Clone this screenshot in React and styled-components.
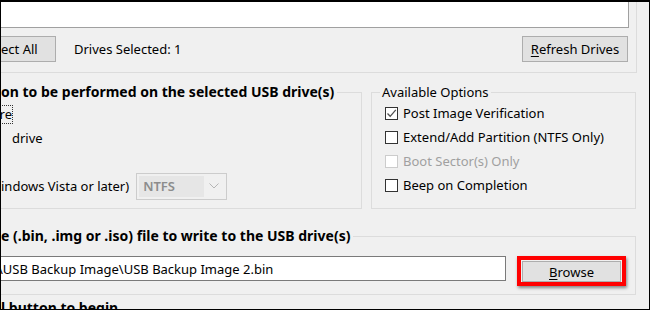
import React from 'react';
import styled, { createGlobalStyle } from 'styled-components';

const GlobalStyle = createGlobalStyle`
  html, body {
    margin: 0;
    padding: 0;
    background: #ffffff;
  }
  * {
    box-sizing: border-box;
  }
`;

const Frame = styled.div`
  width: 650px;
  height: 310px;
  border: 1px solid #000;
  border-top-width: 2px;
  background: #f0f0f0;
  overflow: hidden;
  display: flex;
  flex-direction: column;
  font-family: 'Noto Sans', 'Open Sans', sans-serif;
  font-size: 13px;
  color: #000;
`;

const DriveGroup = styled.div`
  width: 636px;
  height: 71px;
  flex-shrink: 0;
  padding-right: 7px;
  border-right: 1px solid #dcdcdc;
  border-bottom: 1px solid #dcdcdc;
`;

const DriveList = styled.div`
  height: 26px;
  background: #fff;
  border-right: 1px solid #a0a0a0;
  border-bottom: 1px solid #a0a0a0;
`;

const ButtonRow = styled.div`
  display: flex;
  align-items: center;
  margin-top: 8px;
  padding-right: 1px;
`;

const Button = styled.button`
  height: ${(p) => p.$h || 26}px;
  width: ${(p) => p.$w}px;
  padding: 0;
  background: #e1e1e1;
  border: 1px solid #adadad;
  font: inherit;
  color: #000;
  display: flex;
  align-items: center;
  justify-content: ${(p) => (p.$cut ? 'flex-start' : 'center')};
  ${(p) => p.$cut && 'border-left: none;'}
  u {
    text-decoration: underline;
    text-underline-offset: 2px;
  }
`;

const Status = styled.span`
  margin-left: 18px;
`;

const Spacer = styled.div`
  flex: 1;
`;

const Row = styled.div`
  display: flex;
  margin-top: ${(p) => p.$mt || 0}px;
  flex-shrink: 0;
`;

const Group = styled.fieldset`
  margin: 0;
  margin-left: ${(p) => p.$ml || 0}px;
  padding: 0;
  min-width: 0;
  width: ${(p) => p.$w}px;
  height: ${(p) => p.$h}px;
  border: 1px solid #dcdcdc;
  ${(p) => p.$cut && 'border-left: none;'}
  flex-shrink: 0;
`;

const Legend = styled.legend`
  padding: ${(p) => (p.$cut ? '0 3px 0 0' : '0 2px')};
  margin-left: ${(p) => p.$ml || 0}px;
  line-height: 18px;
  font-size: ${(p) => (p.$bold ? 14 : 13)}px;
  font-weight: ${(p) => (p.$bold ? 700 : 400)};
  white-space: nowrap;
`;

const Options = styled.div`
  display: flex;
  flex-direction: column;
  padding-left: ${(p) => p.$pl || 0}px;
  margin-top: ${(p) => p.$mt || 0}px;
`;

const OptionRow = styled.div`
  height: 24px;
  display: flex;
  align-items: center;
  color: ${(p) => (p.$disabled ? '#a0a0a0' : '#000')};
`;

const Focus = styled.span`
  outline: 1px dotted #333;
  line-height: 17px;
  width: 11px;
  display: inline-flex;
  justify-content: flex-end;
  overflow: hidden;
`;

const Indent = styled.span`
  margin-left: ${(p) => p.$ml}px;
`;

const Box = styled.span`
  width: 13px;
  height: 13px;
  border: 1px solid ${(p) => (p.$disabled ? '#cccccc' : '#333333')};
  background: #fff;
  margin-right: 5px;
  display: flex;
  align-items: center;
  justify-content: center;
  flex-shrink: 0;
`;

const Combo = styled.div`
  width: 91px;
  height: 27px;
  margin-left: 7px;
  border: 1px solid #cccccc;
  background: #f0f0f0;
  display: flex;
  align-items: center;
  padding: 2px;
  color: #8c8c8c;
  font-weight: 600;
`;

const ComboText = styled.div`
  flex: 1;
  align-self: stretch;
  display: flex;
  align-items: center;
  padding-left: 4px;
  background: #e6e6e6;
`;

const ComboArrow = styled.div`
  width: 20px;
  display: flex;
  justify-content: center;
`;

const FileRow = styled.div`
  display: flex;
  align-items: flex-start;
  margin-top: 11px;
`;

const FileField = styled.div`
  width: 505px;
  height: 25px;
  background: #fff;
  border: 1px solid #7a7a7a;
  border-left: none;
  display: flex;
  align-items: center;
  white-space: nowrap;
  overflow: hidden;
  text-indent: -3px;
`;

const Highlight = styled.div`
  margin-left: 11px;
  width: 109px;
  height: 30px;
  border: 4px solid #ff0000;
  box-shadow: 1px 2px 3px rgba(0, 0, 0, 0.45);
  padding: 1px 0 0 1px;
`;

const Footer = styled.div`
  margin-top: 4px;
  font-size: 14px;
  font-weight: 700;
  line-height: 18px;
  white-space: nowrap;
`;

function Check({ checked, disabled, children }) {
  return (
    <OptionRow $disabled={disabled}>
      <Box $disabled={disabled}>
        {checked && (
          <svg width="11" height="11" viewBox="0 0 11 11">
            <path d="M1.5 5.5 L4.2 8.3 L9.8 1.8" fill="none" stroke="#505050" strokeWidth="1.3" />
          </svg>
        )}
      </Box>
      {children}
    </OptionRow>
  );
}

export default function App() {
  return (
    <>
      <GlobalStyle />
      <Frame>
        <DriveGroup>
          <DriveList />
          <ButtonRow>
            <Button $w={55} $cut>ect All</Button>
            <Status>Drives Selected: 1</Status>
            <Spacer />
            <Button $w={106}>
              <span><u>R</u>efresh Drives</span>
            </Button>
          </ButtonRow>
        </DriveGroup>

        <Row $mt={10}>
          <Group $w={361} $h={126} $cut>
            <Legend $cut $bold>on to be performed on the selected USB drive(s)</Legend>
            <Options $mt={1}>
              <OptionRow>
                <Focus>re</Focus>
              </OptionRow>
              <OptionRow>
                <Indent $ml={11}>drive</Indent>
              </OptionRow>
              <OptionRow />
              <OptionRow>
                <span>indows Vista or later)</span>
                <Combo>
                  <ComboText>NTFS</ComboText>
                  <ComboArrow>
                    <svg width="10" height="6" viewBox="0 0 10 6">
                      <path d="M0.5 0.5 L5 5 L9.5 0.5" fill="none" stroke="#b5b5b5" strokeWidth="1" />
                    </svg>
                  </ComboArrow>
                </Combo>
              </OptionRow>
            </Options>
          </Group>
          <Group $w={265} $h={126} $ml={9}>
            <Legend $ml={8}>Available Options</Legend>
            <Options $pl={13}>
              <Check checked>Post Image Verification</Check>
              <Check>Extend/Add Partition (NTFS Only)</Check>
              <Check disabled>Boot Sector(s) Only</Check>
              <Check>Beep on Completion</Check>
            </Options>
          </Group>
        </Row>

        <Row $mt={18}>
          <Group $w={635} $h={68} $cut>
            <Legend $cut $bold>e (.bin, .img or .iso) file to write to the USB drive(s)</Legend>
            <FileRow>
              <FileField>\USB Backup Image\USB Backup Image 2.bin</FileField>
              <Highlight>
                <Button $w={99} $h={21}>
                  <span><u>B</u>rowse</span>
                </Button>
              </Highlight>
            </FileRow>
          </Group>
        </Row>

        <Footer>l button to begin</Footer>
      </Frame>
    </>
  );
}
